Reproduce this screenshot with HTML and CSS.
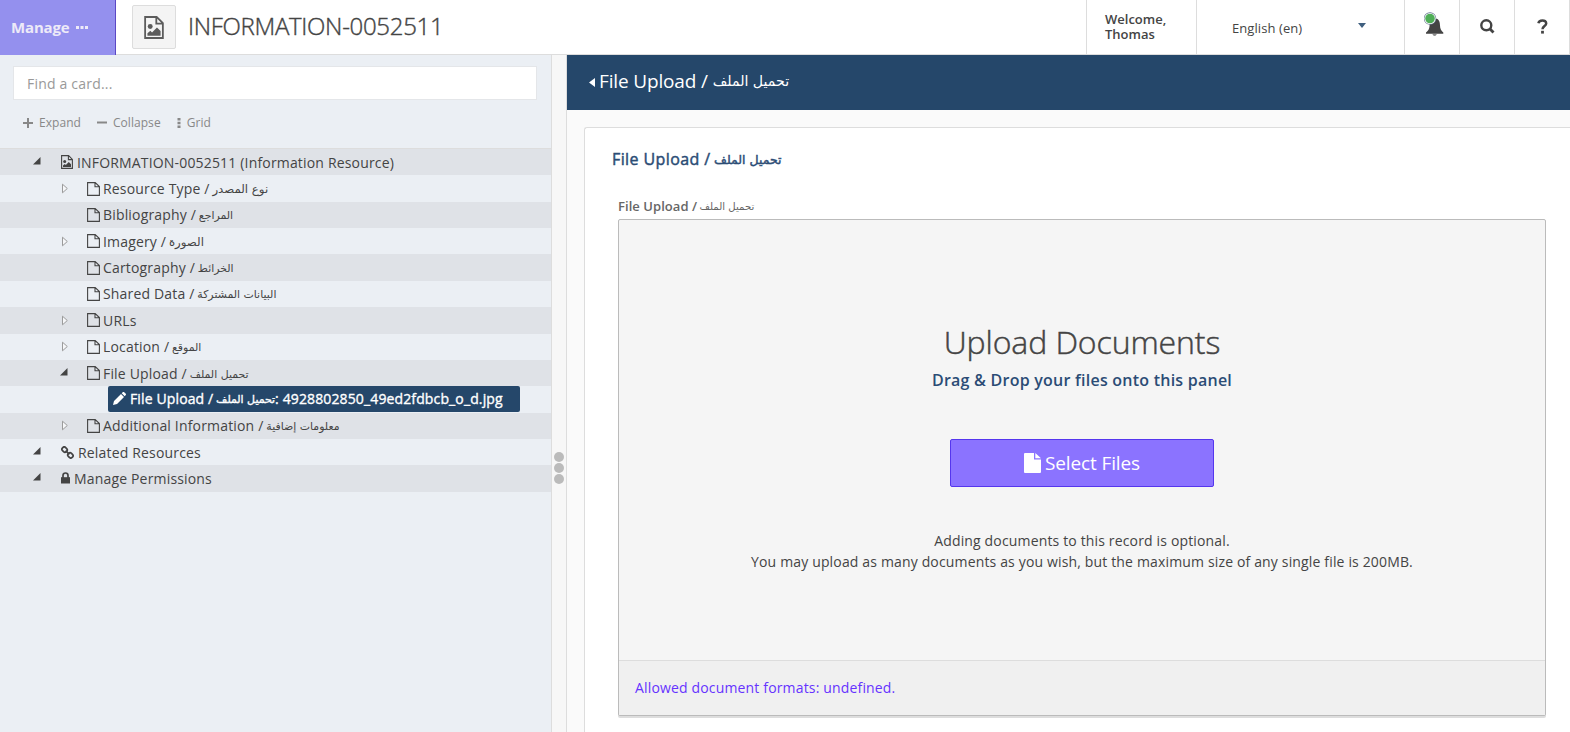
FILE: index.html
```html
<!DOCTYPE html>
<html lang="en">
<head>
<meta charset="utf-8">
<title>INFORMATION-0052511</title>
<link rel="stylesheet" href="styles.css">
</head>
<body>
<svg class="defs" width="0" height="0">
  <symbol id="file-o" viewBox="0 0 13 14"><path d="M.6 .6H8.2L12.4 4.6V13.4H.6ZM8 .6V4.8H12.4" fill="none" stroke="currentColor" stroke-width="1.1"/></symbol>
  <symbol id="file-img" viewBox="0 0 12 14"><path d="M.6 .6H7.6L11.4 4.4V13.4H.6ZM7.4 .6V4.6H11.4" fill="none" stroke="currentColor" stroke-width="1.1"/><circle cx="3.7" cy="6.4" r="1.5" fill="currentColor"/><path d="M2 12V10.5L3.8 9L4.8 10L7.8 7L10 9.2V12Z" fill="currentColor"/></symbol>
  <symbol id="open" viewBox="0 0 8 8"><path d="M7.5 0V7.5H0Z" fill="currentColor"/></symbol>
  <symbol id="closed" viewBox="0 0 7 11"><path d="M1 1.2L5.8 5.5L1 9.8Z" fill="#f6f7f9" stroke="#9b9b9b"/></symbol>
</svg>
<header class="topbar">
  <div class="manage"><span>Manage</span><svg width="12" height="3"><path d="M0 0h3v3H0zM4.5 0h3v3h-3zM9 0h3v3H9z" fill="#edeaf8"/></svg></div>
  <div class="res-icon"><svg width="20" height="23"><use href="#file-img"/></svg></div>
  <h1 class="res-title">INFORMATION-0052511</h1>
  <div class="welcome">Welcome,<br>Thomas</div>
  <div class="language"><span>English (en)</span><svg width="8" height="5"><path d="M0 0H8L4 5Z" fill="#3f5f7f"/></svg></div>
  <div class="tool bell"><svg width="20" height="26" viewBox="0 0 20 26"><path d="M11 6.5C15 6.5 16 10 16 13.5C16 17 17.5 19 19.3 20.5V21.7H2V20.5C4.5 18.5 5.4 17 5.6 13C5.8 9 7.5 7 11 6.5Z" fill="#444"/><path d="M8.3 22.3Q10.6 25.3 12.9 22.3" fill="#666"/><circle cx="6" cy="6.5" r="6.2" fill="#65788f"/><circle cx="6" cy="6.5" r="5.6" fill="#fff"/><circle cx="6" cy="6.5" r="4.8" fill="#4fae57"/></svg></div>
  <div class="tool"><svg width="15" height="15" viewBox="0 0 15 15"><circle cx="6.3" cy="6.3" r="5" fill="none" stroke="#444" stroke-width="2.4"/><path d="M10 10L13.5 13.5" stroke="#444" stroke-width="2.8"/></svg></div>
  <div class="tool"><svg width="11" height="15" viewBox="0 0 11 15"><path d="M1.4 4.2C2 .6 9.2 .3 9.2 4.4C9.2 7 5.5 7 5.5 10.2" fill="none" stroke="#444" stroke-width="2.5"/><path d="M4.1 11.8h2.8v2.8H4.1z" fill="#444"/></svg></div>
</header>
<div class="body">
  <aside class="sidebar">
    <div class="search">Find a card...</div>
    <div class="actions">
      <span class="a1"><svg width="10" height="10"><path d="M5 0V10M0 5H10" stroke="#888" stroke-width="2"/></svg>Expand</span>
      <span class="a2"><svg width="10" height="10"><path d="M0 4.5H10" stroke="#888" stroke-width="2"/></svg>Collapse</span>
      <span class="a3"><svg width="4" height="10"><path d="M.5 0h3v2.5h-3zM.5 3.7h3v2.5h-3zM.5 7.4h3V10h-3z" fill="#888"/></svg>Grid</span>
    </div>
    <div class="tree">
      <div class="row l0"><svg class="tw" width="8" height="8"><use href="#open"/></svg><svg class="ic" width="12" height="14"><use href="#file-img"/></svg><span>INFORMATION-0052511 (Information Resource)</span></div>
      <div class="row l1"><svg class="tw" width="7" height="11"><use href="#closed"/></svg><svg class="ic" width="13" height="14"><use href="#file-o"/></svg><span>Resource Type / <bdi class="wide">نوع المصدر</bdi></span></div>
      <div class="row l1"><i class="tw"></i><svg class="ic" width="13" height="14"><use href="#file-o"/></svg><span>Bibliography / <bdi>المراجع</bdi></span></div>
      <div class="row l1"><svg class="tw" width="7" height="11"><use href="#closed"/></svg><svg class="ic" width="13" height="14"><use href="#file-o"/></svg><span>Imagery / <bdi class="wide">الصورة</bdi></span></div>
      <div class="row l1"><i class="tw"></i><svg class="ic" width="13" height="14"><use href="#file-o"/></svg><span>Cartography / <bdi>الخرائط</bdi></span></div>
      <div class="row l1"><i class="tw"></i><svg class="ic" width="13" height="14"><use href="#file-o"/></svg><span>Shared Data / <bdi>البيانات المشتركة</bdi></span></div>
      <div class="row l1"><svg class="tw" width="7" height="11"><use href="#closed"/></svg><svg class="ic" width="13" height="14"><use href="#file-o"/></svg><span>URLs</span></div>
      <div class="row l1"><svg class="tw" width="7" height="11"><use href="#closed"/></svg><svg class="ic" width="13" height="14"><use href="#file-o"/></svg><span>Location / <bdi>الموقع</bdi></span></div>
      <div class="row l1"><svg class="tw" width="8" height="8"><use href="#open"/></svg><svg class="ic" width="13" height="14"><use href="#file-o"/></svg><span>File Upload / <bdi>تحميل الملف</bdi></span></div>
      <div class="row l2"><div class="selected"><svg width="13" height="13" viewBox="0 0 13 13"><path d="M0 13L1 9L8 2L11 5L4 12ZM8.7 1.3L10 0Q10.6-.3 11.2 .2L12.8 1.8Q13.2 2.4 12.8 3L11.7 4.3Z" fill="#fff"/></svg><span>File Upload / <bdi>تحميل الملف</bdi>: 4928802850_49ed2fdbcb_o_d.jpg</span></div></div>
      <div class="row l1"><svg class="tw" width="7" height="11"><use href="#closed"/></svg><svg class="ic" width="13" height="14"><use href="#file-o"/></svg><span>Additional Information / <bdi>معلومات إضافية</bdi></span></div>
      <div class="row l0"><svg class="tw" width="8" height="8"><use href="#open"/></svg><svg class="ic" width="13" height="13" viewBox="0 0 13 13"><g fill="none" stroke="#444" stroke-width="1.7"><rect x="-2.7" y="-2.2" width="5.4" height="4.4" rx="2" transform="translate(3.6 3.6) rotate(45)"/><rect x="-2.7" y="-2.2" width="5.4" height="4.4" rx="2" transform="translate(9.4 9.4) rotate(45)"/><path d="M4.6 4.6L8.4 8.4"/></g></svg><span>Related Resources</span></div>
      <div class="row l0"><svg class="tw" width="8" height="8"><use href="#open"/></svg><svg class="ic" width="9" height="12" viewBox="0 0 9 12"><path d="M0 5.2H9V11.5H0Z" fill="#444"/><path d="M2 6V3.5Q2 1 4.5 1T7 3.5V6" fill="none" stroke="#444" stroke-width="1.7"/></svg><span>Manage Permissions</span></div>
    </div>
  </aside>
  <div class="splitter"><i></i><i></i><i></i></div>
  <main class="main">
    <div class="crumb"><svg width="6" height="9"><path d="M6 0V9L0 4.5Z" fill="#fff"/></svg><span>File Upload / <bdi>تحميل الملف</bdi></span></div>
    <section class="card">
      <h2>File Upload / <bdi>تحميل الملف</bdi></h2>
      <label class="label">File Upload / <bdi>تحميل الملف</bdi></label>
      <div class="drop">
        <div class="drop-main">
          <div class="big">Upload Documents</div>
          <div class="sub">Drag &amp; Drop your files onto this panel</div>
          <div class="button"><svg width="17" height="20"><path d="M0 1Q0 0 1 0H10V6.5H17V19Q17 20 16 20H1Q0 20 0 19ZM11.3 0L17 5.3H11.3Z" fill="#fff"/></svg><span>Select Files</span></div>
          <p class="note">Adding documents to this record is optional.<br>You may upload as many documents as you wish, but the maximum size of any single file is 200MB.</p>
        </div>
        <div class="drop-foot">Allowed document formats: undefined.</div>
      </div>
    </section>
  </main>
</div>
</body>
</html>
```

FILE: styles.css
```css
* { box-sizing: border-box; }
body { margin: 0; width: 1570px; height: 732px; overflow: hidden; background: #fafafa; color: #444; font-family: "Open Sans", "DejaVu Sans", sans-serif; font-size: 14px; white-space: nowrap; display: flex; flex-direction: column; }
.defs { display: none; }
svg { display: block; flex: none; }
bdi { display: inline-block; line-height: 1; transform: translateY(-1px); font-family: "DejaVu Sans", sans-serif; font-size: .78em; font-weight: 400; letter-spacing: 0; margin-left: -1px; }
bdi.wide { font-size: .84em; }

.topbar { height: 55px; flex: none; display: flex; background: #fff; border-bottom: 1px solid #ddd; }
.manage { width: 116px; height: 55px; background: #9490ee; border-right: 1px solid #5b48c4; color: #edeaf8; font-weight: 700; font-size: 15px; letter-spacing: -.15px; display: flex; align-items: center; gap: 6px; padding: 0 0 2px 11px; }
.manage svg { margin-top: 1px; }
.res-icon { width: 44px; height: 44px; margin: 5px 12px 0 16px; background: #f4f4f4; border: 1px solid #ddd; border-radius: 2px; color: #5c5c5c; display: flex; align-items: center; justify-content: center; }
.res-title { margin: 0; flex: 1; font-size: 24px; font-weight: 300; line-height: 51px; letter-spacing: -.3px; -webkit-text-stroke: .4px #444; }
.welcome { width: 110px; border-left: 1px solid #ddd; padding: 12px 0 0 18px; font-size: 13px; line-height: 15px; font-weight: 600; }
.language { width: 208px; border-left: 1px solid #ddd; display: flex; justify-content: space-between; padding: 0 38px 0 35px; font-size: 13px; line-height: 56px; letter-spacing: .08px; }
.language svg { margin-top: 23px; }
.tool { width: 55px; border-left: 1px solid #ddd; display: flex; align-items: center; justify-content: center; padding-bottom: 2px; }
.bell { padding: 0 0 5px 3px; }
.tool:last-child { width: 56px; border-right: 1px solid #ddd; }

.body { flex: 1; display: flex; min-height: 0; }
.sidebar { width: 551px; background: #ebeff4; }
.search { margin: 11px 14px 0 13px; height: 34px; border: 1px solid #e4e6e9; background: #fff; color: #999; padding-left: 13px; line-height: 33px; letter-spacing: .2px; }
.actions { display: flex; height: 48px; align-items: center; padding: 0 0 3px 23px; font-size: 12px; letter-spacing: .05px; color: #888; }
.actions span { display: flex; align-items: center; gap: 6px; }
.a2, .a3 { margin-left: 16px; }
.tree { border-top: 1px solid #ddd; }
.row { height: 26.36px; display: flex; align-items: center; }
.row:nth-child(odd) { background: #dfe2e7; }
.row > span { letter-spacing: .17px; }
.l0 { padding-left: 33px; }
.l1 { padding-left: 61px; }
.l2 { padding-left: 108px; }
.tw { width: 8px; margin-right: 20px; flex: none; }
.l0 .tw, .l1 .tw[height="8"] { margin-bottom: 3px; }
.l1 .tw { margin-right: 18px; }
.l1 .tw[height="8"] { margin-left: -1px; margin-right: 19px; }
.ic { margin-right: 4px; }
.l1 .ic { margin-right: 3px; }
.selected { width: 412px; height: 26px; display: flex; align-items: center; gap: 4px; padding: 0 0 1px 5px; background: #25476a; color: #fff; border-radius: 2px; letter-spacing: .13px; -webkit-text-stroke: .35px #fff; }

.splitter { width: 16px; background: #f7f7f7; border: solid #ddd; border-width: 0 1px; display: flex; flex-direction: column; align-items: center; gap: 1px; padding-top: 397px; }
.splitter i { width: 10px; height: 10px; border-radius: 50%; background: #bbb; flex: none; }

.main { flex: 1; min-width: 0; }
.crumb { height: 55px; background: #25476a; color: #fff; font-size: 19px; letter-spacing: -.15px; display: flex; align-items: center; gap: 4px; padding: 0 0 4px 22px; }
.crumb svg { margin-top: 3px; }
.crumb bdi { font-size: .745em; transform: translateY(-2px); margin-left: 0; }
.card { margin: 17px 0 0 17px; height: 620px; background: #fff; border: 1px solid #ddd; border-right: 0; border-radius: 3px 0 0 0; padding: 19px 24px 0 33px; }
.card h2 { margin: 0 0 0 -6px; font-size: 16px; line-height: 24px; font-weight: 400; letter-spacing: .4px; color: #2b4c75; -webkit-text-stroke: .45px #2b4c75; }
.label { display: block; margin-top: 26px; height: 18px; font-size: 13px; line-height: 18px; font-weight: 600; letter-spacing: .05px; color: #666; }
.drop { margin-top: 4px; width: 928px; height: 497px; border: 1px solid #bbb; border-radius: 2px; box-shadow: 0 2px #ddd; display: flex; flex-direction: column; background: #f5f5f5; }
.drop-main { flex: 1; text-align: center; display: flex; flex-direction: column; align-items: center; padding-top: 100px; }
.big { font-size: 32px; line-height: 44px; font-weight: 300; letter-spacing: -.1px; -webkit-text-stroke: .45px #444; }
.sub { font-size: 16px; line-height: 24px; margin-top: 4px; font-weight: 600; letter-spacing: .24px; color: #2b4c75; }
.button { width: 264px; height: 48px; margin-top: 47px; background: #8b73ff; border: 1px solid #5536ee; border-radius: 2px; color: #fff; font-size: 19px; letter-spacing: -.12px; display: flex; align-items: center; justify-content: center; gap: 4px; }
.note { margin: 43px 0 0; line-height: 21px; letter-spacing: .155px; }
.drop-foot { height: 55px; border-top: 1px solid #ddd; background: #f0f0f0; color: #6633ff; line-height: 54px; padding-left: 16px; letter-spacing: .16px; }
```
